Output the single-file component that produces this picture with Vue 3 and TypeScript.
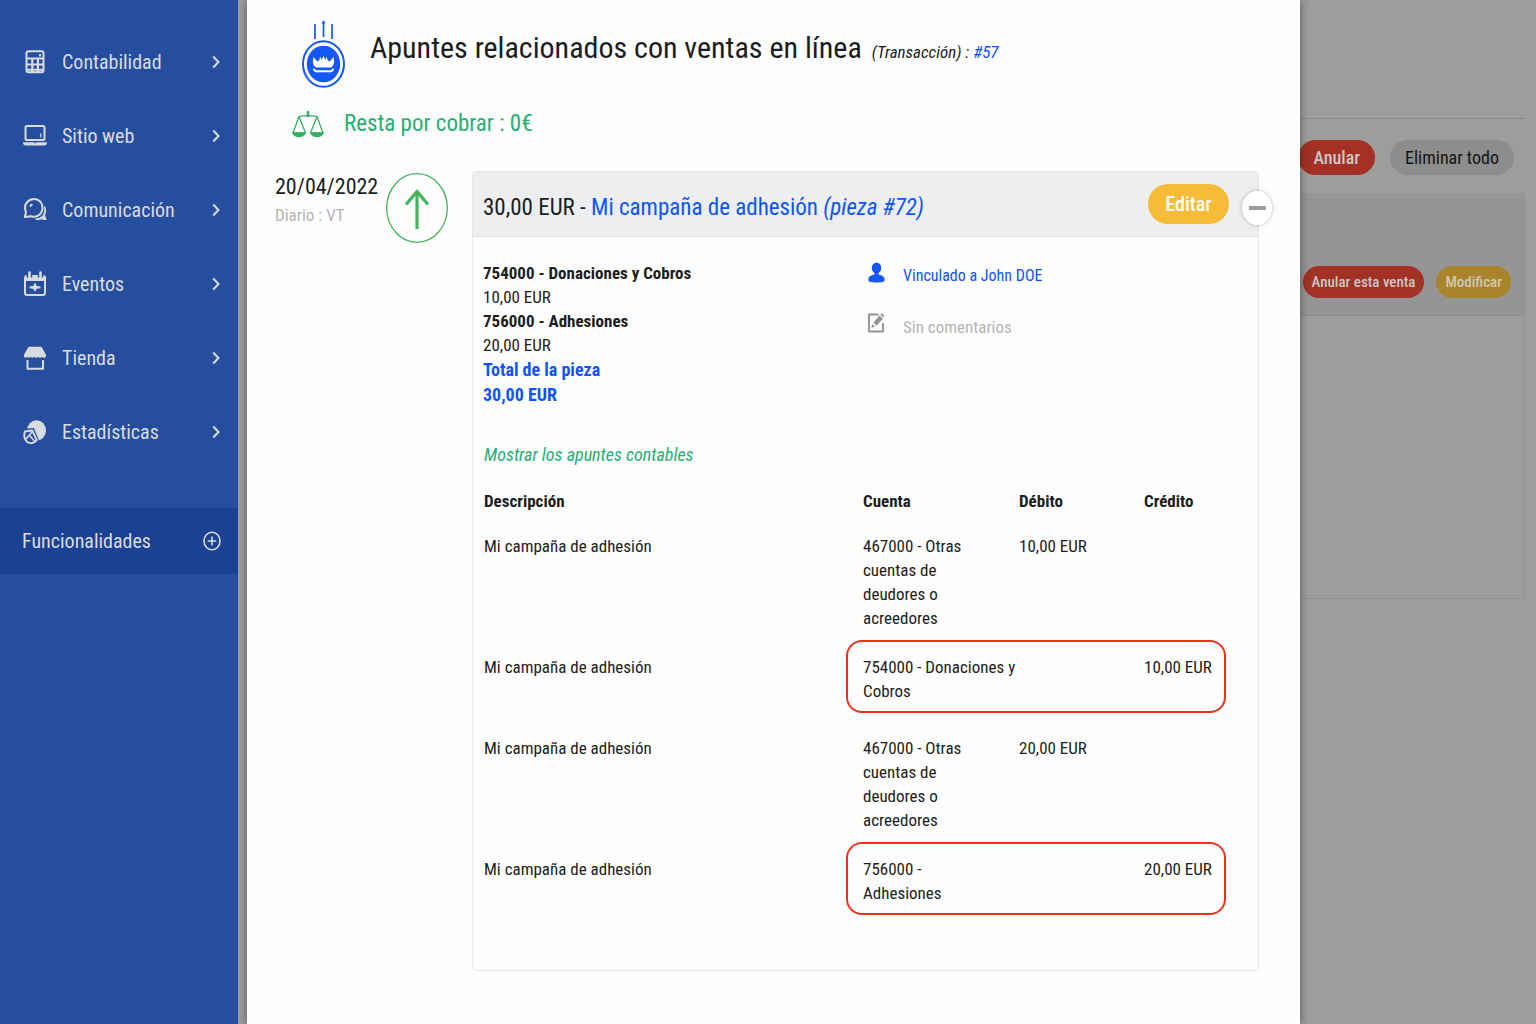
<script setup lang="ts">
interface MenuItem {
  label: string
  icon: string
}

interface Entry {
  description: string
  account: string
  debit: string
  credit: string
  marked: boolean
}

const menu: MenuItem[] = [
  { label: 'Contabilidad', icon: 'calculator' },
  { label: 'Sitio web', icon: 'laptop' },
  { label: 'Comunicación', icon: 'chat' },
  { label: 'Eventos', icon: 'calendar' },
  { label: 'Tienda', icon: 'shop' },
  { label: 'Estadísticas', icon: 'chart' },
]

const entries: Entry[] = [
  { description: 'Mi campaña de adhesión', account: '467000 - Otras\ncuentas de\ndeudores o\nacreedores', debit: '10,00 EUR', credit: '', marked: false },
  { description: 'Mi campaña de adhesión', account: '754000 - Donaciones y\nCobros', debit: '', credit: '10,00 EUR', marked: true },
  { description: 'Mi campaña de adhesión', account: '467000 - Otras\ncuentas de\ndeudores o\nacreedores', debit: '20,00 EUR', credit: '', marked: false },
  { description: 'Mi campaña de adhesión', account: '756000 -\nAdhesiones', debit: '', credit: '20,00 EUR', marked: true },
]
</script>

<template>
  <div class="app">
    <nav class="sidebar">
      <ul class="menu">
        <li v-for="item in menu" :key="item.label">
          <a href="#" class="menu-link">
            <svg class="menu-icon" viewBox="0 0 26 26" aria-hidden="true">
              <g v-if="item.icon === 'calculator'">
                <rect x="4.500" y="2.200" width="17" height="21" rx="2" fill="none" stroke="currentColor" stroke-width="2" />
                <path d="M4 9.500H22M4 15.500H22M10.300 9.500V23M15.900 9.500V23" stroke="currentColor" stroke-width="2.200" fill="none" />
                <path d="M4 20.800H22" stroke="currentColor" stroke-width="2" />
                <path d="M17 5h2v2.500h-2z" fill="currentColor" />
              </g>
              <g v-else-if="item.icon === 'laptop'">
                <rect x="3.500" y="3" width="19" height="14" rx="1.500" fill="none" stroke="currentColor" stroke-width="2" />
                <path d="M1 19.200h10.500l1.500 1 1.500-1H25c0 2.200-1 3.300-3 3.300H4c-2 0-3-1.100-3-3.300z" fill="currentColor" />
                <path d="M18.800 10.500v4" stroke="currentColor" stroke-width="1.200" />
              </g>
              <g v-else-if="item.icon === 'chat'" fill="none" stroke="currentColor" stroke-width="2" stroke-linejoin="round" stroke-linecap="round">
                <path d="M2.800 20l1.200-4.500C2.500 12 3 7.500 5.500 4.800 9 1 15.500 1 18.600 5c3 3.800 2.500 9.500-.8 12.500-2.600 2.300-5.800 2.800-8.600 1.700z" />
                <path d="M22.800 10c1.300 3 1 6-.3 8.500l1.700 4c-2 .2-3.500 0-4.700-.7-2 1-4 1-6 .2 3.500-.2 6-1.500 7.500-3.600 1.500-2.200 2-5 1.800-8.400z" fill="currentColor" stroke-width="1" />
                <path d="M8.300 9l1.500-1.200" />
              </g>
              <g v-else-if="item.icon === 'calendar'">
                <rect x="3" y="5" width="20" height="19" rx="2" fill="none" stroke="currentColor" stroke-width="2" />
                <path d="M3 5h20v5H3z" fill="currentColor" />
                <path d="M7.500 1v5.500M18.500 1v5.500" stroke="#264e9f" stroke-width="5.500" />
                <path d="M7.500 1.500v5.500M18.500 1.500v5.500" stroke="currentColor" stroke-width="2.600" stroke-linecap="round" />
                <path d="M13 11.500l1.700 3.400 3.800.5v1.800l-3.800.6L13 21l-1.700-3.200-3.800-.6v-1.800l3.800-.5z" fill="currentColor" />
              </g>
              <g v-else-if="item.icon === 'shop'">
                <path d="M6.500 1.800h13L24 9.800c.4 1.800-.5 3-2 3-1 0-1.600-.4-2-1-1 1.300-3 1.300-3.800 0-.9 1.300-2.800 1.300-3.700 0-.9 1.300-2.800 1.300-3.700 0-.9 1.300-2.500 1.200-3.300 0-.5.6-1 1-1.800 1-1.300 0-2.200-1.200-1.700-3z" fill="currentColor" />
                <path d="M5.500 15v8.800h15.500v-8.800" fill="none" stroke="currentColor" stroke-width="2" stroke-linejoin="round" />
              </g>
              <g v-else>
                <ellipse cx="14.500" cy="11.500" rx="9.500" ry="10.300" fill="currentColor" />
                <path d="M0 10.200l11.800-1.200 5.300 12.500-3 4.500H0z" fill="#264e9f" />
                <path d="M2.800 12.500l7.500-1 4.500 9.500c-2.500 3.500-7 4-9.800 1.700-2.400-2-3.200-6-2.200-10.200z" fill="none" stroke="currentColor" stroke-width="1.900" stroke-linejoin="round" />
                <path d="M3.500 20.500L10 13M7.500 16.500l5 5.500" stroke="currentColor" stroke-width="1.700" />
              </g>
            </svg>
            <span class="menu-label">{{ item.label }}</span>
            <svg class="chevron" viewBox="0 0 8 14" aria-hidden="true">
              <path d="M1.200 1.500L6.500 7L1.200 12.500" fill="none" stroke="currentColor" stroke-width="2" />
            </svg>
          </a>
        </li>
      </ul>
      <button type="button" class="features">
        <span>Funcionalidades</span>
        <svg class="plus" viewBox="0 0 18 20" aria-hidden="true">
          <ellipse cx="9" cy="10" rx="8" ry="8.800" fill="none" stroke="currentColor" stroke-width="1.600" />
          <path d="M9 5.500v9M4.700 10h8.600" stroke="currentColor" stroke-width="1.600" />
        </svg>
      </button>
    </nav>

    <div class="stage">
      <section class="page">
        <div class="page-actions">
          <button type="button" class="pill red">Anular</button>
          <button type="button" class="pill grey">Eliminar todo</button>
        </div>
        <div class="page-card">
          <div class="page-card-head">
            <button type="button" class="pill small red">Anular esta venta</button>
            <button type="button" class="pill small amber">Modificar</button>
          </div>
        </div>
      </section>

      <main class="modal" role="dialog" aria-labelledby="title">
        <header class="head">
          <svg class="coin" viewBox="0 0 44 70" aria-hidden="true">
            <path d="M14 4v15M22.500 1v16M31 4v15" stroke="#1557f5" stroke-width="1.700" />
            <path d="M20.500 3.500l2-3 2 3z" fill="#1557f5" />
            <ellipse cx="22.500" cy="44" rx="20.500" ry="22.800" fill="none" stroke="#1557f5" stroke-width="2" />
            <ellipse cx="22.500" cy="44" rx="16.700" ry="18.300" fill="#1557f5" />
            <path d="M12.500 37l3.800 4.500 2-1.300.9-3.700 1.300 3.200 2-3.700 2 3.700 1.300-3.200.9 3.700 2 1.300 3.800-4.500c1.300 5 .3 9-2.500 10.500h-15c-2.800-1.500-3.800-5.500-2.500-10.500z" fill="#fff" />
            <path d="M13 49.500q1 2.300 4 1.800h11q3 .5 4-1.800" fill="none" stroke="#fff" stroke-width="2" stroke-linecap="round" />
          </svg>
          <h1 id="title">Apuntes relacionados con ventas en línea</h1>
          <em class="ref">(Transacción) : <a href="#">#57</a></em>
        </header>

        <p class="balance">
          <svg class="scales" viewBox="0 0 34 28" aria-hidden="true">
            <g fill="none" stroke="#35b063" stroke-width="1.300">
              <path d="M7 6.800q10-2.500 20 0M8 6.500L2 23h12.500zM26 6.500L19.500 23H32z" stroke-linejoin="round" />
            </g>
            <path d="M17 1v6" stroke="#35b063" stroke-width="2.400" />
            <path d="M1 22.500h14c-1 3.300-3.500 4.700-7 4.700S2 25.800 1 22.500zM19 22.500h14c-1 3.300-3.500 4.700-7 4.700s-6-1.400-7-4.700z" fill="#35b063" />
          </svg>
          <span>Resta por cobrar : 0€</span>
        </p>

        <div class="piece">
          <div class="when">
            <div class="stamp">
              <time datetime="2022-04-20">20/04/2022</time>
              <span class="journal">Diario : VT</span>
            </div>
            <svg class="up" viewBox="0 0 62 70" aria-hidden="true">
              <ellipse cx="31" cy="35" rx="30.300" ry="34.300" fill="none" stroke="#45b35e" stroke-width="1.300" />
              <path d="M31 56V19" stroke="#45b35e" stroke-width="3.200" />
              <path d="M20 31.500L31 18.500L42 31.500" fill="none" stroke="#45b35e" stroke-width="3.200" />
            </svg>
          </div>

          <article class="card">
            <header class="card-head">
              <h2>30,00 EUR - <a href="#">Mi campaña de adhesión <em>(pieza #72)</em></a></h2>
              <button type="button" class="edit">Editar</button>
              <button type="button" class="collapse" aria-label="Plegar"><span class="dash"></span></button>
            </header>

            <div class="details">
              <dl class="totals">
                <dt>754000 - Donaciones y Cobros</dt>
                <dd>10,00 EUR</dd>
                <dt>756000 - Adhesiones</dt>
                <dd>20,00 EUR</dd>
                <dt class="sum">Total de la pieza</dt>
                <dd class="sum">30,00 EUR</dd>
              </dl>
              <div class="notes">
                <a href="#" class="note linked">
                  <svg viewBox="0 0 18 22" aria-hidden="true">
                    <ellipse cx="9.500" cy="7" rx="4.700" ry="5.500" fill="#1557f5" />
                    <path d="M7.500 11h4v2.500c4 .7 6.200 2.500 6.200 5 0 2.300-2.200 3-8.200 3s-8.200-.7-8.200-3c0-2.500 2.200-4.300 6.200-5z" fill="#1557f5" />
                  </svg>
                  <span>Vinculado a John DOE</span>
                </a>
                <p class="note muted">
                  <svg viewBox="0 0 18 22" aria-hidden="true">
                    <path d="M11.500 2.500H2v17h14V11" fill="none" stroke="#929498" stroke-width="1.900" />
                    <path d="M6.500 10.500l6-7 3.500 3.200-6.500 7zM5.500 12l2.500 2.500L4.200 16zM13.300 2.600l1.500-1.400 2.700 2.500-1.300 1.600z" fill="#929498" />
                  </svg>
                  <span>Sin comentarios</span>
                </p>
              </div>
            </div>

            <a href="#" class="toggle">Mostrar los apuntes contables</a>

            <table class="entries">
              <colgroup>
                <col />
                <col class="c-account" />
                <col class="c-debit" />
                <col class="c-credit" />
              </colgroup>
              <thead>
                <tr>
                  <th scope="col">Descripción</th>
                  <th scope="col" class="account">Cuenta</th>
                  <th scope="col">Débito</th>
                  <th scope="col">Crédito</th>
                </tr>
              </thead>
              <tbody>
                <tr v-for="(entry, i) in entries" :key="i" :class="{ marked: entry.marked }">
                  <td>{{ entry.description }}</td>
                  <td class="account">{{ entry.account }}</td>
                  <td class="debit">{{ entry.debit }}</td>
                  <td class="credit">{{ entry.credit }}</td>
                </tr>
              </tbody>
            </table>
          </article>
        </div>
      </main>
    </div>
  </div>
</template>

<style>
body {
  margin: 0;
  background: #9d9d9d;
}
</style>

<style scoped>
* {
  box-sizing: border-box;
}

.app {
  display: flex;
  min-height: 100vh;
  font-family: "Roboto Condensed", Roboto, sans-serif;
  font-size: 17px;
  line-height: 24px;
  color: #1c1d20;
}

a {
  color: #0f55f5;
  text-decoration: none;
}

button {
  font-family: inherit;
  border: 0;
  padding: 0;
  cursor: pointer;
}

h1,
h2,
p,
ul,
dl,
dd {
  margin: 0;
  padding: 0;
  font-weight: 400;
}

svg {
  display: block;
  flex: none;
}

.sidebar {
  flex: none;
  width: 238px;
  padding-top: 25px;
  background: #264e9f;
  color: #d8dbe2;
  font-size: 20px;
}

.menu {
  list-style: none;
}

.menu-link {
  display: flex;
  align-items: center;
  height: 74px;
  padding: 0 18px 0 22px;
  color: inherit;
}

.menu-icon {
  width: 26px;
  height: 26px;
  margin-right: 14px;
}

.menu-label {
  flex: 1;
}

.chevron {
  width: 8px;
  height: 14px;
}

.features {
  display: flex;
  align-items: center;
  justify-content: space-between;
  width: 100%;
  height: 66px;
  margin-top: 39px;
  padding: 0 17px 0 22px;
  background: #1b4192;
  color: inherit;
  font-size: 20px;
}

.plus {
  width: 18px;
  height: 20px;
}

.stage {
  flex: 1;
  min-width: 0;
  display: grid;
  background: #9d9d9d;
}

.page,
.modal {
  grid-area: 1 / 1;
}

.page {
  padding: 118px 11px 0 40px;
}

.page-actions {
  display: flex;
  justify-content: flex-end;
  gap: 15px;
  padding: 21px 11px 18px 0;
  border-top: 1px solid #8a8a8a;
}

.pill {
  height: 35px;
  padding: 0 15px;
  border-radius: 18px;
  font-size: 18px;
}

.pill.small {
  height: 32px;
  padding: 0 9px;
  border-radius: 16px;
  font-size: 15px;
  font-weight: 500;
}

.pill.red {
  background: #a33125;
  color: #cdc5c4;
  font-weight: 500;
}

.pill.grey {
  background: #8d8d8d;
  color: #151515;
}

.pill.amber {
  background: #a9842a;
  color: #cfc8b4;
}

.page-card {
  height: 406px;
  border: 1px solid #929292;
  border-radius: 4px;
}

.page-card-head {
  display: flex;
  justify-content: flex-end;
  align-items: flex-end;
  gap: 12px;
  height: 122px;
  padding: 0 13px 17px 0;
  border-bottom: 1px solid #8c8c8c;
  background: #959595;
}

.modal {
  margin: 0 236px 0 9px;
  padding: 20px 41px 54px 28px;
  background: #fdfdfd;
  box-shadow: 0 0 9px rgba(0, 0, 0, 0.45);
}

.head {
  display: flex;
  align-items: flex-start;
  padding-left: 26px;
}

.coin {
  width: 44px;
  height: 70px;
  margin-right: 25px;
}

h1 {
  font-size: 30px;
  line-height: 56px;
}

.ref {
  margin-left: 10px;
  line-height: 64px;
}

.balance {
  display: flex;
  align-items: center;
  gap: 19px;
  height: 28px;
  margin-top: 20px;
  padding-left: 16px;
  font-size: 23px;
  color: #27b073;
}

.scales {
  width: 34px;
  height: 28px;
}

.piece {
  display: flex;
  align-items: flex-start;
  margin-top: 33px;
}

.when {
  display: flex;
  align-items: flex-start;
  justify-content: space-between;
  flex: none;
  width: 173px;
  margin-right: 24px;
  padding-top: 2px;
}

.stamp {
  display: flex;
  flex-direction: column;
}

time {
  font-size: 22px;
  line-height: 28px;
}

.journal {
  line-height: 28px;
  color: #b3b4b6;
}

.up {
  width: 62px;
  height: 70px;
}

.card {
  flex: 1;
  min-width: 0;
  border: 1px solid #e6e7e9;
  border-radius: 4px;
}

.card-head {
  position: relative;
  display: flex;
  align-items: center;
  justify-content: space-between;
  height: 65px;
  padding: 0 29px 0 10px;
  border-bottom: 1px solid #dddfe2;
  background: #edeef0;
}

h2 {
  font-size: 23px;
  line-height: 32px;
  padding-top: 8px;
}

.edit {
  width: 81px;
  height: 40px;
  border-radius: 20px;
  background: #f6bc37;
  color: #fff;
  font-size: 20px;
  font-weight: 500;
}

.collapse {
  position: absolute;
  right: -14px;
  top: 19px;
  display: flex;
  align-items: center;
  justify-content: center;
  width: 30px;
  height: 34px;
  border-radius: 50%;
  background: #fff;
  box-shadow: 0 0 4px rgba(0, 0, 0, 0.25);
}

.dash {
  width: 17px;
  height: 4px;
  background: #9c9da1;
}

.details {
  display: grid;
  grid-template-columns: 1fr 391px;
  padding: 24px 0 0 10px;
}

dt {
  font-weight: 700;
}

.sum {
  font-size: 18px;
  line-height: 25px;
  font-weight: 700;
  color: #0f55f5;
}

.notes {
  display: flex;
  flex-direction: column;
  gap: 24px;
}

.note {
  display: flex;
  align-items: flex-start;
  gap: 18px;
}

.note svg {
  width: 18px;
  height: 22px;
}

.note span {
  padding-top: 3px;
}

.linked {
  font-size: 16px;
}

.muted {
  color: #b3b4b6;
}

.toggle {
  display: inline-block;
  margin: 36px 0 0 11px;
  font-size: 18px;
  font-style: italic;
  color: #27b073;
}

.entries {
  width: calc(100% - 32px);
  margin: 24px 0 55px;
  border-collapse: separate;
  border-spacing: 0;
  table-layout: fixed;
}

.c-account {
  width: 173px;
}

.c-debit {
  width: 125px;
}

.c-credit {
  width: 82px;
}

th {
  padding: 0;
  line-height: 20px;
  text-align: left;
}

td {
  padding: 23px 0 10px;
  vertical-align: top;
}

th:first-child,
td:first-child {
  padding-left: 11px;
}

.account {
  padding-left: 17px;
  white-space: pre-line;
}

.marked td {
  padding: 15px 0 10px;
}

.marked td:first-child {
  padding-left: 11px;
}

.marked .account,
.marked .debit,
.marked .credit {
  padding: 13px 0 8px;
  border: solid #f0301c;
  border-width: 2px 0;
}

.marked .account {
  padding-left: 15px;
  border-left-width: 2px;
  border-radius: 16px 0 0 16px;
}

.marked .credit {
  border-right-width: 2px;
  border-radius: 0 16px 16px 0;
}
</style>
